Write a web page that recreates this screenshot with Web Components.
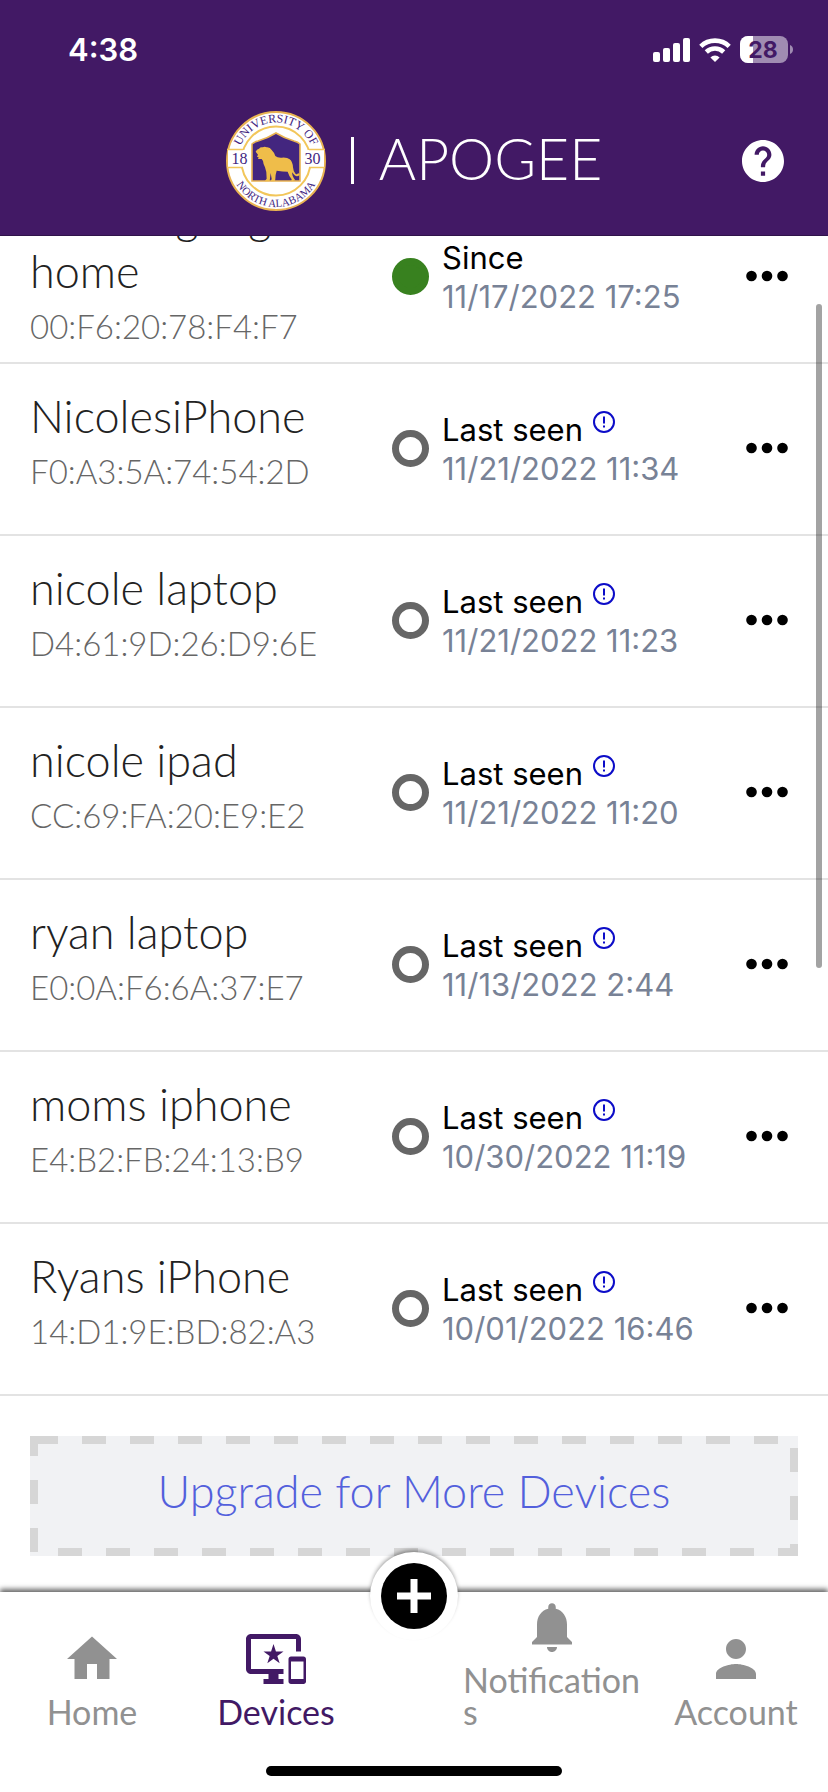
<!DOCTYPE html>
<html lang="en">
<head>
<meta charset="utf-8">
<meta name="viewport" content="width=device-width, initial-scale=1">
<title>Apogee devices</title>
<style>
  html, body { margin: 0; height: 100%; background: #fff; }
  body { font-family: Lato, "Open Sans", sans-serif; }
</style>
</head>
<body>
<apogee-app></apogee-app>

<script>
const define = (name, html, setup) => {
  const tpl = document.createElement('template');
  tpl.innerHTML = html;
  customElements.define(name, class extends HTMLElement {
    constructor() {
      super();
      this.attachShadow({ mode: 'open' }).append(tpl.content.cloneNode(true));
    }
    connectedCallback() { if (setup) setup(this, this.shadowRoot); }
  });
};

define('phone-status', `
<style>
  :host { display: flex; align-items: center; justify-content: space-between; height: 100px; padding: 0 34px 0 68px; box-sizing: border-box; color: #fff; font-family: Inter, sans-serif; }
  time { font-size: 31px; font-weight: 600; line-height: 40px; }
  .icons { display: flex; align-items: center; gap: 9px; }
  svg { display: block; }
</style>
<time>4:38</time>
<div class="icons">
  <svg width="37" height="24" viewBox="0 0 37 24" fill="#fff" aria-label="Signal">
    <rect y="14" width="7" height="10" rx="2"/><rect x="10" y="10" width="7" height="14" rx="2"/>
    <rect x="20" y="5" width="7" height="19" rx="2"/><rect x="30" width="7" height="24" rx="2"/>
  </svg>
  <svg width="32" height="24" viewBox="0 0 32 24" aria-label="Wi-Fi">
    <g fill="none" stroke="#fff" stroke-width="4.6"><path d="M1.8 8.3a20.5 20.5 0 0 1 28.4 0"/><path d="M7.3 14a12.6 12.6 0 0 1 17.4 0"/></g>
    <path fill="#fff" d="M16 24l-4.6-4.6a6.6 6.6 0 0 1 9.2 0z"/>
  </svg>
  <svg width="54" height="28" viewBox="0 0 54 28" aria-label="Battery">
    <clipPath id="b"><rect width="48" height="27" rx="8"/></clipPath>
    <g clip-path="url(#b)"><rect width="48" height="27" fill="#a08cb2"/><rect width="13" height="27" fill="#fff"/></g>
    <path fill="#a08cb2" d="M50 9c4 1 4 8 0 9z"/>
    <text x="23" y="22" text-anchor="middle" font-size="23" font-weight="700" fill="#421965">28</text>
  </svg>
</div>`);

define('university-seal', `
<style>:host { display: block; width: 100px; height: 100px; } svg { display: block; }</style>
<svg width="100" height="100" viewBox="0 0 100 100" role="img" aria-label="University of North Alabama, 1830">
  <circle cx="50" cy="50" r="49" fill="#fff" stroke="#e9b352" stroke-width="2"/>
  <circle cx="50" cy="50" r="34.5" fill="none" stroke="#f2c65a" stroke-width="2"/>
  <path fill="#fff" d="M2 39h22v17H2zM76 39h22v17H76z"/>
  <path stroke="#f2c65a" stroke-width="1.6" d="M1 38.500h16M83 38.500h16M1 56.500h16M83 56.500h16"/>
  <path fill="#43267f" stroke="#e9b352" stroke-width="1.600" d="M26 70V33q2-2 6-3 10-3 18-8 8 5 18 8 4 1 6 3v37z"/>
  <g transform="translate(-14 -11) scale(.33333)">
    <path fill="#efbd4a" d="M131 155q3-8 10-9 4-5 11-4 6-3 12 0 10-1 15 8 8 8 11 18 6 6 20 5 16-1 23 5 9 7 10 24 1 14 8 20 4 3 7-2 7 0 4 6-7 6-14 0-5-5-7-9-2 8 6 20l3 4-12 3 1-6q-8-10-12-23-14 0-33-3-4 12-4 25l-1 6-13 1 3-7-3-18-3 24-15 1 6-8q1-20-5-34-5-8-6-19l-4-6-11 0 2-5-5-2 3-6z"/>
  </g>
  <defs>
    <path id="top" d="M11.500 50a38.500 38.500 0 0 1 77 0"/>
    <path id="bottom" d="M4 50a46 46 0 0 0 92 0"/>
  </defs>
  <g fill="#43267f" font-family="Liberation Serif, serif" text-anchor="middle">
    <text font-size="12"><textPath href="#top" startOffset="50%">UNIVERSITY OF</textPath></text>
    <text font-size="11"><textPath href="#bottom" startOffset="50%">NORTH ALABAMA</textPath></text>
    <text x="13.500" y="53" font-size="16">18</text>
    <text x="86.500" y="53" font-size="16">30</text>
  </g>
</svg>`);

define('app-header', `
<style>
  :host { display: block; flex: none; background: #421965; border-bottom: 1px solid #30134a; color: #fff; }
  .bar { display: grid; grid-template-columns: 1fr auto 1fr; align-items: center; height: 135px; box-sizing: border-box; padding: 0 44px 14px; }
  .brand { grid-column: 2; display: flex; align-items: center; gap: 25px; font-size: 57px; line-height: 64px; font-weight: 300; }
  .brand i { width: 3px; height: 47px; background: #fff; }
  h1 { margin: 0; padding-bottom: 6px; font: inherit; }
  button { justify-self: end; padding: 0; border: 0; background: none; }
  svg { display: block; }
</style>
<phone-status></phone-status>
<div class="bar">
  <div class="brand"><university-seal></university-seal><i></i><h1>APOGEE</h1></div>
  <button aria-label="Help">
    <svg width="42" height="42" viewBox="2 2 20 20" fill="#fff"><path d="M12 2C6.480 2 2 6.480 2 12s4.480 10 10 10 10-4.480 10-10S17.520 2 12 2zm1 17h-2v-2h2v2zm2.070-7.750l-.9.920C13.450 12.900 13 13.500 13 15h-2v-.5c0-1.100.450-2.100 1.170-2.830l1.240-1.260c.370-.360.590-.860.590-1.410 0-1.100-.9-2-2-2s-2 .9-2 2H8c0-2.210 1.790-4 4-4s4 1.790 4 4c0 .880-.360 1.680-.930 2.250z"/></svg>
  </button>
</div>`);

define('device-row', `
<style>
  :host { display: grid; grid-template-columns: minmax(0, 362fr) 50px minmax(0, 304fr) 42px; grid-template-rows: 100%; align-items: center; height: 172px; box-sizing: border-box; padding: 0 40px 2px 30px; border-bottom: 2px solid #e3e3e3; }
  .id { padding-bottom: 14px; }
  h2 { margin: 0; font-size: 45px; line-height: 54px; font-weight: 300; color: #222; }
  .mac { margin: 5px 0 0; font-size: 33px; line-height: 46px; font-weight: 300; color: #666; }
  .dot { width: 37px; height: 37px; box-sizing: border-box; border: 7px solid #666; border-radius: 50%; }
  :host([online]) .dot { border-color: #38811f; background: #38811f; }
  .seen { padding-top: 2px; font: 31px/39px Inter, sans-serif; color: #000; white-space: nowrap; }
  .line { display: flex; gap: 9px; }
  .line svg { display: block; width: 24px; height: 24px; }
  :host([online]) .line svg { display: none; }
  .date { color: #788296; }
  button { padding: 0; border: 0; background: none; height: 40px; }
  button svg { display: block; margin: auto; }
</style>
<div class="id"><h2><slot></slot></h2><p class="mac"></p></div>
<span class="dot"></span>
<div class="seen">
  <div class="line"><span class="label"></span><svg viewBox="0 0 24 24" role="img" aria-label="More information"><circle cx="12" cy="12" r="10" fill="none" stroke="#0c0cc8" stroke-width="2"/><path d="M11 6.500h2v7h-2zM11 15.500h2v2h-2z" fill="#0c0cc8"/></svg></div>
  <div class="date"></div>
</div>
<button aria-label="Device options"><svg width="42" height="12" viewBox="0 0 42 12"><circle cx="5.500" cy="6" r="5.300"/><circle cx="21" cy="6" r="5.300"/><circle cx="36.500" cy="6" r="5.300"/></svg></button>
`, (el, root) => {
  root.querySelector('.mac').textContent = el.getAttribute('mac');
  root.querySelector('.date').textContent = el.getAttribute('date');
  root.querySelector('.label').textContent = el.hasAttribute('online') ? 'Since' : 'Last seen';
});

define('upgrade-button', `
<style>
  :host { display: block; padding: 40px 30px 80px; }
  button { position: relative; display: block; width: 100%; height: 120px; padding: 0 0 10px; border: 0; background: #f1f2f4; color: #5360dc; font: 300 45px/54px Lato, sans-serif; }
  svg { position: absolute; inset: 0; width: 100%; height: 100%; }
  rect { x: 4px; y: 4px; width: calc(100% - 8px); height: calc(100% - 8px); fill: none; stroke: #d6d6d6; stroke-width: 8; stroke-dasharray: 24; }
</style>
<button><svg aria-hidden="true"><rect/></svg><slot></slot></button>`);

define('device-list', `
<style>
  :host { position: relative; display: block; flex: 1; min-height: 0; }
  .scroll { height: 100%; overflow-y: auto; scrollbar-width: none; }
  .thumb { position: absolute; right: 6px; top: 5%; width: 6px; height: 49%; border-radius: 3px; background: #0000005c; }
</style>
<div class="scroll"><slot></slot></div><div class="thumb"></div>`);

define('nav-item', `
<style>
  :host { display: block; min-width: 0; }
  a { display: flex; flex-direction: column; align-items: center; gap: 7px; color: #919191; text-decoration: none; font-size: 34px; line-height: 32px; }
  :host([active]) a { color: #421965; }
  svg { display: block; width: 60px; height: 60px; fill: currentColor; }
  span { max-width: 178px; overflow-wrap: anywhere; }
</style>
<a href="#"><svg viewBox="0 0 24 24" aria-hidden="true"><path/></svg><span><slot></slot></span></a>`,
(el, root) => {
  const icons = {
    home: 'M10 20v-6h4v6h5v-8h3L12 3 2 12h3v8z',
    devices: 'M23 11.010L18 11c-.550 0-1 .450-1 1v9c0 .550.450 1 1 1h5c.550 0 1-.450 1-1v-9c0-.550-.450-.990-1-.990zM23 20h-5v-7h5v7zM20 2H2C.890 2 0 2.890 0 4v12c0 1.100.890 2 2 2h7v2H7v2h8v-2h-2v-2h2v-2H2V4h18v5h2V4c0-1.110-.9-2-2-2zm-8.030 7L11 6l-.970 3H7l2.470 1.760-.940 2.910 2.470-1.800 2.470 1.800-.940-2.910L15 9h-3.030z',
    bell: 'M12 22c1.100 0 2-.9 2-2h-4c0 1.100.890 2 2 2zm6-6v-5c0-3.070-1.640-5.640-4.500-6.320V4c0-.830-.670-1.500-1.500-1.500s-1.500.670-1.500 1.500v.680C7.630 5.360 6 7.920 6 11v5l-2 2v1h16v-1l-2-2z',
    person: 'M12 12c2.210 0 4-1.790 4-4s-1.790-4-4-4-4 1.790-4 4 1.790 4 4 4zm0 2c-2.670 0-8 1.340-8 4v2h16v-2c0-2.660-5.330-4-8-4z'
  };
  root.querySelector('path').setAttribute('d', icons[el.getAttribute('icon')]);
});

define('tab-bar', `
<style>
  :host { position: relative; display: block; flex: none; background: #fff; box-shadow: 0 -3px 5px #0009; }
  nav { display: grid; grid-template-columns: 2fr 2fr 1fr 2fr 2fr; align-items: end; height: 200px; box-sizing: border-box; padding-bottom: 64px; }
  .add { position: absolute; left: 50%; top: -40px; margin-left: -44px; width: 88px; height: 88px; padding: 11px; border: 0; border-radius: 50%; background: #fff; box-shadow: 0 -3px 4px -1px #0006; }
  .add svg { display: block; }
  .home { position: absolute; left: 50%; bottom: 16px; width: 296px; margin-left: -148px; height: 10px; border-radius: 5px; background: #000; }
</style>
<nav>
  <nav-item icon="home">Home</nav-item>
  <nav-item icon="devices" active>Devices</nav-item>
  <span></span>
  <nav-item icon="bell">Notifications</nav-item>
  <nav-item icon="person">Account</nav-item>
</nav>
<button class="add" aria-label="Add device"><svg width="66" height="66" viewBox="0 0 66 66"><circle cx="33" cy="33" r="33"/><path d="M33 16v34M16 33h34" stroke="#fff" stroke-width="7"/></svg></button>
<div class="home"></div>`);

define('apogee-app', `
<style>:host { display: flex; flex-direction: column; height: 100vh; overflow: hidden; }</style>
<app-header></app-header>
<device-list>
  <device-row online mac="00:F6:20:78:F4:F7" date="11/17/2022 17:25">nicoles google home</device-row>
  <device-row mac="F0:A3:5A:74:54:2D" date="11/21/2022 11:34">NicolesiPhone</device-row>
  <device-row mac="D4:61:9D:26:D9:6E" date="11/21/2022 11:23">nicole laptop</device-row>
  <device-row mac="CC:69:FA:20:E9:E2" date="11/21/2022 11:20">nicole ipad</device-row>
  <device-row mac="E0:0A:F6:6A:37:E7" date="11/13/2022 2:44">ryan laptop</device-row>
  <device-row mac="E4:B2:FB:24:13:B9" date="10/30/2022 11:19">moms iphone</device-row>
  <device-row mac="14:D1:9E:BD:82:A3" date="10/01/2022 16:46">Ryans iPhone</device-row>
  <upgrade-button>Upgrade for More Devices</upgrade-button>
</device-list>
<tab-bar></tab-bar>`, (el, root) => {
  // The list opens part-way down the first device, once its rows are in place.
  root.querySelector('device-list').shadowRoot.querySelector('.scroll').scrollTop = 44;
});
</script>
</body>
</html>
